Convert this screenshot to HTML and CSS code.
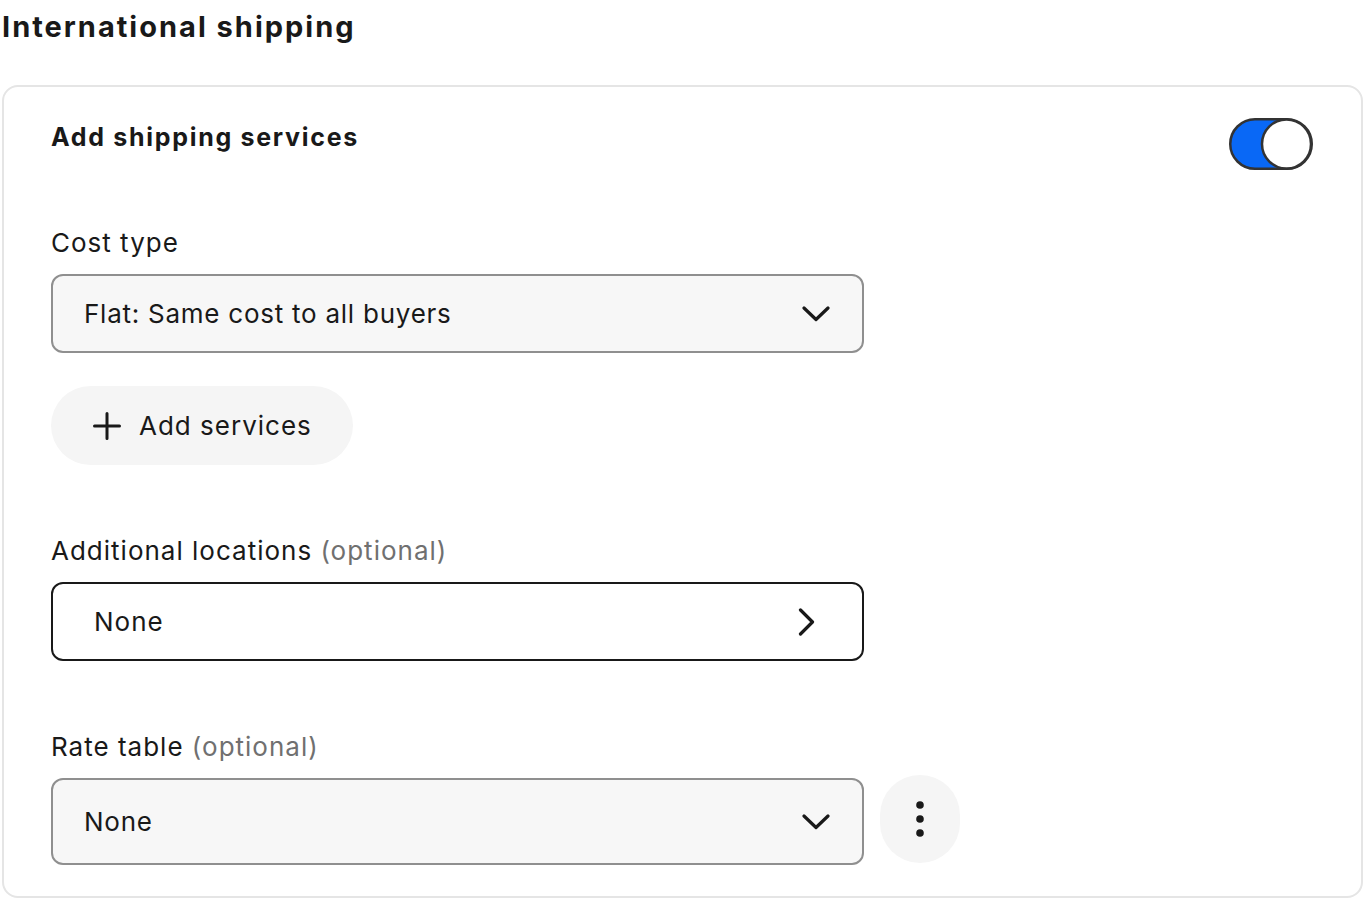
FILE: index.html
```html
<!DOCTYPE html>
<html lang="en">
<head>
<meta charset="utf-8">
<title>International shipping</title>
<link rel="stylesheet" href="styles.css">
</head>
<body>
<main class="page">
  <h1 class="page-title">International shipping</h1>
  <section class="card">
    <div class="card-head">
      <h2 class="card-title">Add shipping services</h2>
      <button class="switch" aria-pressed="true" aria-label="Add shipping services">
        <svg width="84" height="52" viewBox="0 0 84 52" aria-hidden="true">
          <rect x="1.25" y="1.25" width="81.5" height="49.5" rx="24.75" fill="#0968f6" stroke="#333" stroke-width="2.5"/>
          <circle cx="57.5" cy="26" r="24.5" fill="#fff" stroke="#333" stroke-width="2.5"/>
        </svg>
      </button>
    </div>

    <div class="field field-first">
      <label class="label">Cost type</label>
      <div class="select">
        <span class="select-value">Flat: Same cost to all buyers</span>
        <svg class="chev-down" width="28" height="16" viewBox="0 0 28 16" aria-hidden="true">
          <path d="M2 2 L14 13.5 L26 2" fill="none" stroke="#191919" stroke-width="3.2" stroke-linecap="round" stroke-linejoin="round"/>
        </svg>
      </div>
    </div>

    <button class="add-btn">
      <svg width="28" height="28" viewBox="0 0 28 28" aria-hidden="true">
        <path d="M14 1.5 V26.5 M1.5 14 H26.5" stroke="#191919" stroke-width="3" stroke-linecap="round"/>
      </svg>
      <span>Add services</span>
    </button>

    <div class="field field-gap">
      <label class="label">Additional locations <span class="optional">(optional)</span></label>
      <div class="link-box">
        <span class="link-value">None</span>
        <svg class="chev-right" width="18" height="28" viewBox="0 0 18 28" aria-hidden="true">
          <path d="M2.5 2 L14.5 14 L2.5 26" fill="none" stroke="#191919" stroke-width="3.2" stroke-linecap="round" stroke-linejoin="round"/>
        </svg>
      </div>
    </div>

    <div class="field field-gap">
      <label class="label">Rate table <span class="optional">(optional)</span></label>
      <div class="rate-row">
        <div class="select select-tall">
          <span class="select-value">None</span>
          <svg class="chev-down" width="28" height="16" viewBox="0 0 28 16" aria-hidden="true">
            <path d="M2 2 L14 13.5 L26 2" fill="none" stroke="#191919" stroke-width="3.2" stroke-linecap="round" stroke-linejoin="round"/>
          </svg>
        </div>
        <button class="kebab" aria-label="More options">
          <svg width="8" height="36" viewBox="0 0 8 36" aria-hidden="true">
            <circle cx="4" cy="4" r="3.8" fill="#191919"/>
            <circle cx="4" cy="18" r="3.8" fill="#191919"/>
            <circle cx="4" cy="32" r="3.8" fill="#191919"/>
          </svg>
        </button>
      </div>
    </div>
  </section>
</main>
</body>
</html>
```

FILE: styles.css
```css
* {
  box-sizing: border-box;
}

html, body {
  margin: 0;
  padding: 0;
  background: #ffffff;
}

body {
  font-family: Inter, "Open Sans", "Liberation Sans", sans-serif;
  color: #191919;
}

.page {
  padding: 0 1px 0 2px;
}

.page-title {
  margin: 0;
  font-size: 29px;
  line-height: 54px;
  font-weight: 700;
  letter-spacing: 2px;
}

.card {
  margin-top: 31px;
  border: 2px solid #e5e5e5;
  border-radius: 16px;
  padding: 31px 48px 31px 47px;
}

.card-head {
  display: flex;
  justify-content: space-between;
  align-items: flex-start;
}

.card-title {
  margin: 0;
  padding-top: 1px;
  font-size: 25px;
  line-height: 36px;
  font-weight: 700;
  letter-spacing: 1.7px;
}

.switch {
  display: block;
  border: 0;
  padding: 0;
  margin: 0;
  background: none;
  width: 84px;
  height: 52px;
}

.switch svg {
  display: block;
}

.field {
  display: flex;
  flex-direction: column;
  gap: 15px;
}

.field-first {
  margin-top: 57px;
}

.field-gap {
  margin-top: 70px;
}

.label {
  font-size: 26px;
  line-height: 32px;
  font-weight: 430;
  letter-spacing: 1px;
  color: #191919;
}

.optional {
  color: #707070;
}

.select {
  display: flex;
  align-items: center;
  justify-content: space-between;
  width: 813px;
  height: 79px;
  padding: 0 32px 0 31px;
  background: #f7f7f7;
  border: 2px solid #8f8f8f;
  border-radius: 12px;
  font-size: 26px;
  font-weight: 430;
  letter-spacing: 0.75px;
}

.select-tall {
  height: 87px;
}

.select-value {
  line-height: 32px;
}

.chev-down {
  display: block;
  flex: none;
}

.add-btn {
  display: flex;
  align-items: center;
  gap: 18px;
  margin-top: 33px;
  width: 302px;
  height: 79px;
  padding: 0 0 0 42px;
  border: 0;
  border-radius: 40px;
  background: #f5f5f5;
  font-family: inherit;
  font-size: 26px;
  font-weight: 430;
  letter-spacing: 1px;
  color: #191919;
}

.add-btn svg {
  display: block;
  flex: none;
}

.link-box {
  display: flex;
  align-items: center;
  justify-content: space-between;
  width: 813px;
  height: 79px;
  padding: 0 46px 0 41px;
  background: #ffffff;
  border: 2px solid #191919;
  border-radius: 12px;
  font-size: 26px;
  font-weight: 430;
  letter-spacing: 1px;
}

.link-value {
  line-height: 32px;
}

.chev-right {
  display: block;
  flex: none;
}

.rate-row {
  display: flex;
  align-items: center;
  gap: 16px;
}

.kebab {
  display: flex;
  align-items: center;
  justify-content: center;
  width: 80px;
  height: 88px;
  margin-top: -5px;
  border: 0;
  padding: 0;
  border-radius: 40px;
  background: #f5f5f5;
}

.kebab svg {
  display: block;
}
```
